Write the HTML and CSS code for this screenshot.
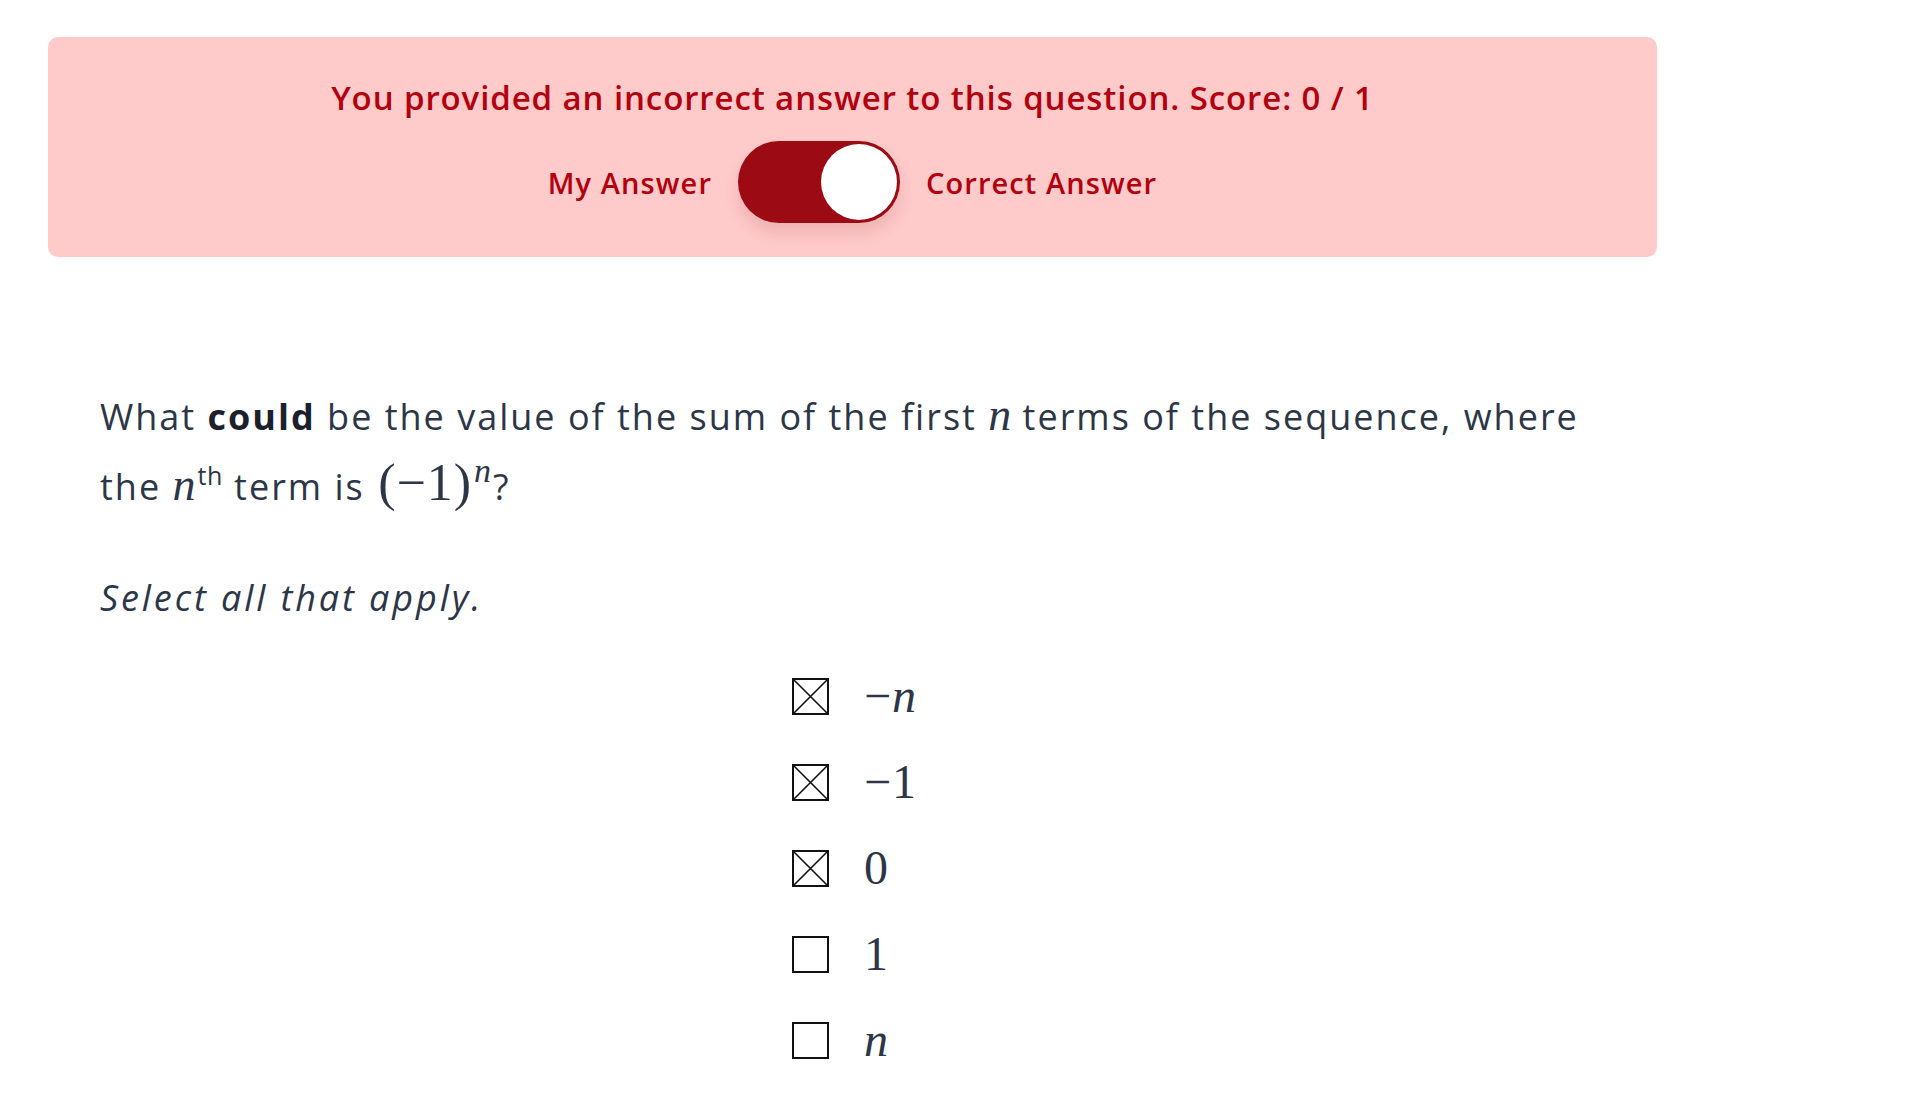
FILE: index.html
```html
<!DOCTYPE html>
<html>
<head>
  <title>Question Review</title>
  <meta charset="UTF-8">
  <meta name="viewport" content="width=device-width, initial-scale=1.0">
  <link rel="stylesheet" href="styles.css">
</head>
<body>
  <div class="banner">
    <div class="banner-title">You provided an incorrect answer to this question. Score: 0 / 1</div>
    <div class="switch-row">
      <span class="switch-label">My Answer</span>
      <div class="switch"><div class="knob"></div></div>
      <span class="switch-label">Correct Answer</span>
    </div>
  </div>

  <div class="question">
    <p class="prompt">What <b>could</b> be the value of the sum of the first <span class="mi">n</span> terms of the sequence, where the <span class="mi">n</span><sup class="th">th</sup> term is <span class="math">(−1)<sup class="mi">n</sup></span>?</p>
    <p class="hint">Select all that apply.</p>

    <div class="choices">
      <div class="choice">
        <svg class="box" viewBox="0 0 37 37"><rect x="1" y="1" width="35" height="35"/><path d="M1 1L36 36M36 1L1 36"/></svg>
        <span class="math">−<span class="mi">n</span></span>
      </div>
      <div class="choice">
        <svg class="box" viewBox="0 0 37 37"><rect x="1" y="1" width="35" height="35"/><path d="M1 1L36 36M36 1L1 36"/></svg>
        <span class="math">−1</span>
      </div>
      <div class="choice">
        <svg class="box" viewBox="0 0 37 37"><rect x="1" y="1" width="35" height="35"/><path d="M1 1L36 36M36 1L1 36"/></svg>
        <span class="math">0</span>
      </div>
      <div class="choice">
        <svg class="box" viewBox="0 0 37 37"><rect x="1" y="1" width="35" height="35"/></svg>
        <span class="math">1</span>
      </div>
      <div class="choice">
        <svg class="box" viewBox="0 0 37 37"><rect x="1" y="1" width="35" height="35"/></svg>
        <span class="math"><span class="mi">n</span></span>
      </div>
    </div>
  </div>
</body>
</html>
```

FILE: styles.css
```css
body { margin: 0; font-family: "Open Sans", Lato, sans-serif; color: #2c3647; background: #fff; }

.banner { width: 1609px; margin: 37px 0 0 48px; padding: 41px 0 34px; box-sizing: border-box; height: 220px; background: #ffcaca; border-radius: 10px; display: flex; flex-direction: column; align-items: center; color: #b2000e; }
.banner-title { font-size: 33px; line-height: 40px; font-weight: 600; letter-spacing: 0.9px; }
.switch-row { display: flex; align-items: center; gap: 26px; margin-top: 23px; }
.switch-label { font-size: 29px; font-weight: 600; letter-spacing: 1.1px; }
.switch { width: 162px; height: 82px; border-radius: 41px; background: #9c0a14; display: flex; align-items: center; justify-content: flex-end; padding: 0 3px; box-sizing: border-box; box-shadow: 0 10px 16px rgba(120, 0, 0, 0.12); }
.knob { width: 76px; height: 76px; border-radius: 50%; background: #fff; }

.question { padding-left: 100px; }
.prompt { width: 1510px; margin: 125px 0 0; font-size: 36px; line-height: 70px; letter-spacing: 2px; }
.prompt b { color: #1a202c; font-weight: 700; }
.mi { font-family: "Liberation Serif", serif; font-style: italic; font-size: 46px; letter-spacing: 0; line-height: 1; }
.math { font-family: "Liberation Serif", serif; font-size: 52px; letter-spacing: 1px; line-height: 1; margin: 0 2px; }
.math sup.mi { font-size: 34px; margin-left: 2px; }
sup { line-height: 0; }
.th { font-size: 25px; vertical-align: 15px; margin-left: 2px; letter-spacing: 0.5px; }
.hint { margin: 41px 0 0; font-size: 36px; line-height: 70px; font-style: italic; letter-spacing: 2.9px; }

.choices { display: flex; flex-direction: column; padding-left: 692px; margin-top: 20px; }
.choice { display: flex; align-items: center; gap: 35px; height: 86px; }
.choice .math { font-size: 48px; color: #2c3647; margin: 0; }
.choice .math .mi { font-size: 48px; }
.box { width: 37px; height: 37px; fill: none; stroke: #111; stroke-width: 2; }
.box path { stroke-width: 1.6; }
```
